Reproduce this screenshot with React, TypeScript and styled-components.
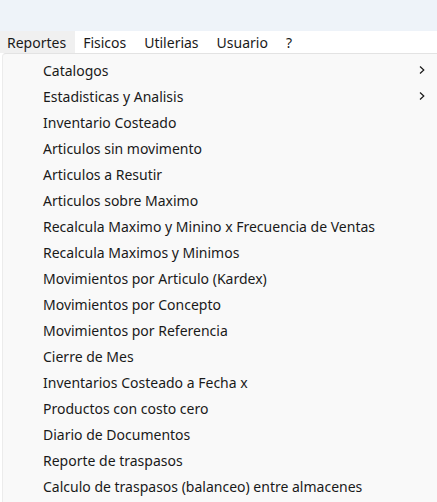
import React from 'react';
import styled, { createGlobalStyle } from 'styled-components';

const GlobalStyle = createGlobalStyle`
  html, body {
    margin: 0;
    padding: 0;
    background: #ffffff;
    font-family: "Noto Sans", "Open Sans", sans-serif;
    color: #1a1a1a;
  }
`;

const Window = styled.div`
  width: 437px;
  height: 502px;
  overflow: hidden;
  background: #ffffff;
  display: flex;
  flex-direction: column;
`;

const TitleStrip = styled.div`
  height: 31px;
  background: #eef3f9;
  flex-shrink: 0;
`;

const MenuBar = styled.div`
  display: flex;
  height: 22px;
  background: #ffffff;
  flex-shrink: 0;
`;

const MenuBarItem = styled.div<{ $active?: boolean }>`
  display: flex;
  align-items: center;
  padding: ${(p) => (p.$active ? '0 9px 0 7px' : '0 10px 0 8px')};
  font-size: 14px;
  background: ${(p) => (p.$active ? '#f0f0f0' : 'transparent')};
  color: #1a1a1a;
`;

const Dropdown = styled.div`
  margin-left: 2px;
  flex: 1;
  background: #f9f9f9;
  border-top: 1px solid #e3e3e3;
  border-left: 1px solid #ececec;
  border-top-left-radius: 4px;
  padding-top: 3px;
  display: flex;
  flex-direction: column;
`;

const Row = styled.div`
  height: 26px;
  display: flex;
  align-items: center;
  padding-left: 40px;
  padding-right: 10px;
  font-size: 14px;
  color: #1a1a1a;
`;

const Label = styled.span`
  flex: 1;
  white-space: nowrap;
`;

const Chevron = styled.svg`
  width: 10px;
  height: 10px;
  flex-shrink: 0;
`;

const menuBar = ['Reportes', 'Fisicos', 'Utilerias', 'Usuario', '?'];

const items: { label: string; sub?: boolean }[] = [
  { label: 'Catalogos', sub: true },
  { label: 'Estadisticas y Analisis', sub: true },
  { label: 'Inventario Costeado' },
  { label: 'Articulos sin movimento' },
  { label: 'Articulos a Resutir' },
  { label: 'Articulos sobre Maximo' },
  { label: 'Recalcula Maximo y Minino x Frecuencia de Ventas' },
  { label: 'Recalcula Maximos y Minimos' },
  { label: 'Movimientos por Articulo (Kardex)' },
  { label: 'Movimientos por Concepto' },
  { label: 'Movimientos por Referencia' },
  { label: 'Cierre de Mes' },
  { label: 'Inventarios Costeado a Fecha x' },
  { label: 'Productos con costo cero' },
  { label: 'Diario de Documentos' },
  { label: 'Reporte de traspasos' },
  { label: 'Calculo de traspasos (balanceo) entre almacenes' },
];

export default function App() {
  return (
    <Window>
      <GlobalStyle />
      <TitleStrip />
      <MenuBar>
        {menuBar.map((m, i) => (
          <MenuBarItem key={m} $active={i === 0}>
            {m}
          </MenuBarItem>
        ))}
      </MenuBar>
      <Dropdown>
        {items.map((it) => (
          <Row key={it.label}>
            <Label>{it.label}</Label>
            {it.sub && (
              <Chevron viewBox="0 0 10 10">
                <path d="M3 1.5 L6.8 5 L3 8.5" fill="none" stroke="#1a1a1a" strokeWidth="1.2" />
              </Chevron>
            )}
          </Row>
        ))}
      </Dropdown>
    </Window>
  );
}
